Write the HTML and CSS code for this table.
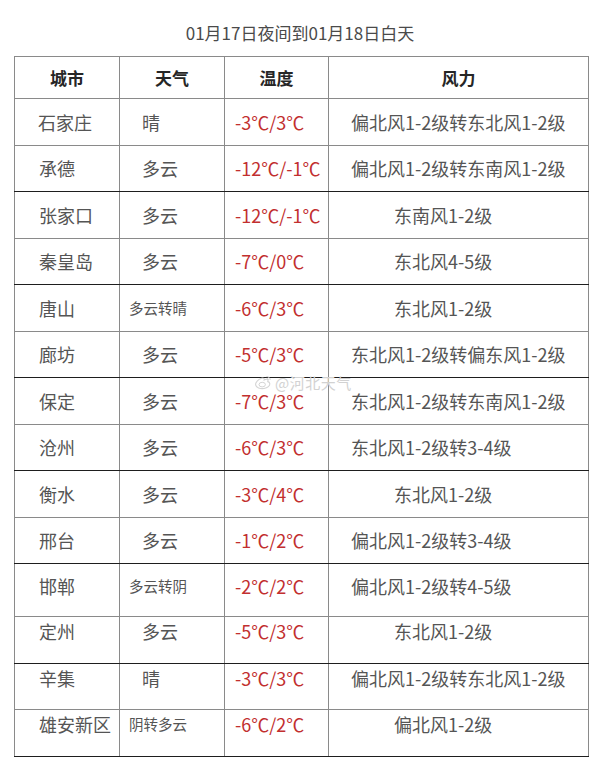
FILE: index.html
```html
<!DOCTYPE html>
<html lang="zh">
<head>
<meta charset="utf-8">
<link rel="stylesheet" href="styles.css">
</head>
<body>
<div class="page">
  <h1 class="title">01月17日夜间到01月18日白天</h1>
  <table class="wx">
    <colgroup>
      <col class="c1"><col class="c2"><col class="c3"><col class="c4">
    </colgroup>
    <thead>
      <tr class="head"><th>城市</th><th>天气</th><th>温度</th><th>风力</th></tr>
    </thead>
    <tbody>
      <tr class="r g"><td class="city city-c">石家庄</td><td class="w">晴</td><td class="t">-3℃/3℃</td><td class="f fl">偏北风1-2级转东北风1-2级</td></tr>
      <tr class="r d"><td class="city">承德</td><td class="w">多云</td><td class="t">-12℃/-1℃</td><td class="f fl">偏北风1-2级转东南风1-2级</td></tr>
      <tr class="r g"><td class="city">张家口</td><td class="w">多云</td><td class="t">-12℃/-1℃</td><td class="f fs">东南风1-2级</td></tr>
      <tr class="r d"><td class="city">秦皇岛</td><td class="w">多云</td><td class="t">-7℃/0℃</td><td class="f fs">东北风4-5级</td></tr>
      <tr class="r g"><td class="city">唐山</td><td class="w ws">多云转晴</td><td class="t">-6℃/3℃</td><td class="f fs">东北风1-2级</td></tr>
      <tr class="r d"><td class="city">廊坊</td><td class="w">多云</td><td class="t">-5℃/3℃</td><td class="f fl">东北风1-2级转偏东风1-2级</td></tr>
      <tr class="r g"><td class="city">保定</td><td class="w">多云</td><td class="t">-7℃/3℃</td><td class="f fl">东北风1-2级转东南风1-2级</td></tr>
      <tr class="r d"><td class="city">沧州</td><td class="w">多云</td><td class="t">-6℃/3℃</td><td class="f fl">东北风1-2级转3-4级</td></tr>
      <tr class="r g"><td class="city">衡水</td><td class="w">多云</td><td class="t">-3℃/4℃</td><td class="f fs">东北风1-2级</td></tr>
      <tr class="r d"><td class="city">邢台</td><td class="w">多云</td><td class="t">-1℃/2℃</td><td class="f fl">偏北风1-2级转3-4级</td></tr>
      <tr class="r g tall top1"><td class="city">邯郸</td><td class="w ws">多云转阴</td><td class="t">-2℃/2℃</td><td class="f fl">偏北风1-2级转4-5级</td></tr>
      <tr class="r d top2"><td class="city">定州</td><td class="w">多云</td><td class="t">-5℃/3℃</td><td class="f fs">东北风1-2级</td></tr>
      <tr class="r g top2"><td class="city">辛集</td><td class="w">晴</td><td class="t">-3℃/3℃</td><td class="f fl">偏北风1-2级转东北风1-2级</td></tr>
      <tr class="r d top2"><td class="city">雄安新区</td><td class="w ws">阴转多云</td><td class="t">-6℃/2℃</td><td class="f fs">偏北风1-2级</td></tr>
    </tbody>
  </table>
  <div class="mark">
    <svg class="mark-logo" width="18" height="15" viewBox="0 0 18 15">
      <path d="M7.5 3.2C4.2 4.4 1.2 7.3 1.6 9.8c.5 2.9 4.6 4.3 8.4 3.7 3.6-.6 6.2-2.7 5.8-4.9-.3-1.6-2-2-2-2 .6-1.3.2-2.4-1.4-2.3-1 .1-2.2.7-2.2.7.4-1.4-.3-2.3-2.7-1.8z" fill="none" stroke="#d4d4d4" stroke-width="1.1"/>
      <ellipse cx="8.2" cy="9.6" rx="3.2" ry="2.3" fill="none" stroke="#d4d4d4" stroke-width="1"/>
      <path d="M12.5 1.5c2 0 3.6 1.4 3.7 3.4M12.7 3.3c1 0 1.8.7 1.9 1.7" fill="none" stroke="#d4d4d4" stroke-width="1"/>
    </svg>
    <span class="mark-text">@河北天气</span>
  </div>
</div>
</body>
</html>
```
FILE: styles.css
```css
html, body {
  margin: 0;
  padding: 0;
  background: #ffffff;
}
body {
  font-family: "Noto Sans CJK SC", "Noto Sans", "Liberation Sans", sans-serif;
  color: #555555;
}
.page {
  position: relative;
  width: 600px;
  height: 775px;
  padding-top: 20px;
  box-sizing: border-box;
}
.title {
  margin: 0 0 10px 0;
  height: 26px;
  line-height: 26px;
  font-size: 17px;
  font-weight: normal;
  color: #4a4a4a;
  text-align: center;
}
.wx {
  margin-left: 14px;
  border-collapse: collapse;
  table-layout: fixed;
  width: 574px;
  font-size: 18px;
}
.c1 { width: 105px; }
.c2 { width: 105px; }
.c3 { width: 104px; }
.c4 { width: 260px; }
.wx th, .wx td {
  padding: 0;
  border-left: 1px solid #8a8a8a;
  border-right: 1px solid #8a8a8a;
  white-space: nowrap;
  overflow: hidden;
  line-height: 24px;
}
.wx th:nth-child(2), .wx td:nth-child(2),
.wx th:nth-child(3), .wx td:nth-child(3) {
  border-left: 1px solid #1e1e1e;
}
.head {
  height: 42px;
}
.head th {
  border-top: 1px solid #8a8a8a;
  border-bottom: 1px solid #8a8a8a;
  font-size: 17px;
  font-weight: bold;
  color: #262626;
  text-align: center;
}
.r {
  height: 46.5px;
}
.r.g td { border-bottom: 1px solid #8a8a8a; }
.r.d td { border-bottom: 1px solid #1e1e1e; }
.r.tall { height: 53px; }
.r.top2 { height: 46.7px; }
.r td {
  vertical-align: middle;
}
.r.top1 td {
  vertical-align: top;
  padding-top: 10px;
}
.r.top2 td {
  vertical-align: top;
  padding-top: 2px;
}
.city {
  padding-left: 24px !important;
  text-align: left;
}
.city-c {
  padding-left: 23px !important;
}
.w {
  padding-left: 22px !important;
  text-align: left;
}
.ws {
  font-size: 14.5px;
  padding-left: 9px !important;
}
.t {
  padding-left: 10px !important;
  color: #c22f2f;
}
.f {
  text-align: left;
}
.fl { padding-left: 22px !important; }
.fs { padding-left: 65px !important; }
.mark {
  position: absolute;
  left: 254px;
  top: 372px;
  display: flex;
  align-items: center;
  gap: 3px;
}
.mark-text {
  font-size: 15px;
  color: #d2d2d2;
  letter-spacing: 0.5px;
}
```
